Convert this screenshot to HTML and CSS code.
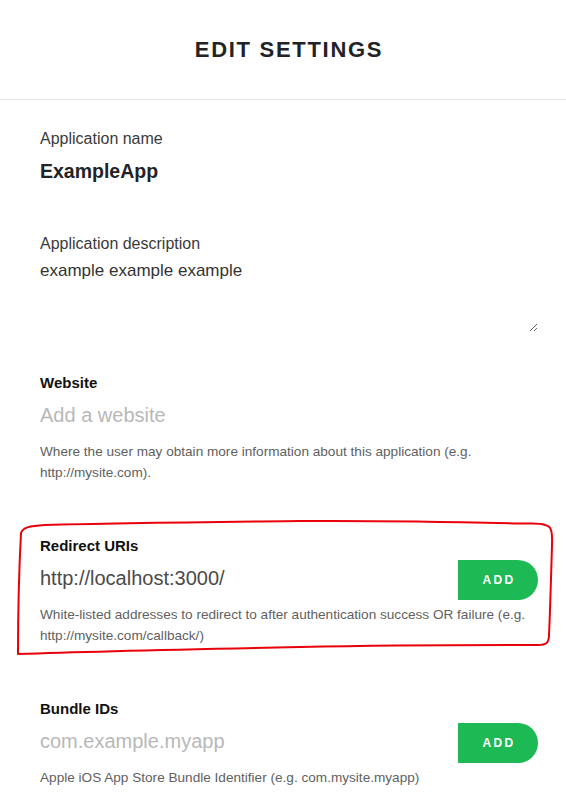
FILE: index.html
```html
<!DOCTYPE html>
<html lang="en">
<head>
<meta charset="utf-8">
<title>Edit settings</title>
<link rel="stylesheet" href="styles.css">
</head>
<body>
<div class="modal">
  <header class="modal-header">
    <h1 class="title">EDIT SETTINGS</h1>
  </header>
  <form class="form">
    <div class="field field-name">
      <label class="label-light">Application name</label>
      <div class="app-name">ExampleApp</div>
    </div>
    <div class="field field-desc">
      <label class="label-light">Application description</label>
      <textarea class="desc">example example example</textarea>
    </div>
    <div class="field field-url">
      <label class="label-bold">Website</label>
      <div class="input-row">
        <input class="text-input" type="text" placeholder="Add a website">
      </div>
      <p class="help">Where the user may obtain more information about this application (e.g. http://mysite.com).</p>
    </div>
    <div class="field field-list">
      <label class="label-bold">Redirect URIs</label>
      <div class="input-row">
        <input class="text-input" type="text" value="http://localhost:3000/">
        <button class="add-btn" type="button">ADD</button>
      </div>
      <p class="help">White-listed addresses to redirect to after authentication success OR failure (e.g. http://mysite.com/callback/)</p>
    </div>
    <div class="field field-list">
      <label class="label-bold">Bundle IDs</label>
      <div class="input-row">
        <input class="text-input" type="text" placeholder="com.example.myapp">
        <button class="add-btn" type="button">ADD</button>
      </div>
      <p class="help">Apple iOS App Store Bundle Identifier (e.g. com.mysite.myapp)</p>
    </div>
  </form>
  <svg class="annotation" width="566" height="801" viewBox="0 0 566 801" aria-hidden="true">
    <path d="M 21 533 C 23 527, 30 526, 45 525 C 120 523, 220 522, 300 521 C 380 520.5, 460 522, 520 523.5 C 532 524, 538 522.5, 545 525 C 551 526, 552.5 530, 552 545 C 551 580, 550 615, 549 635 C 549 643, 546 645, 538 645 C 470 645, 400 645, 300 647 C 200 649, 100 651, 18 654 C 18 620, 19 570, 21 533" fill="none" stroke="#e8000b" stroke-width="2" stroke-linecap="round" stroke-linejoin="round"/>
  </svg>
</div>
</body>
</html>
```

FILE: styles.css
```css
html, body {
  margin: 0;
  padding: 0;
  background: #ffffff;
  overflow: hidden;
}

body {
  font-family: "Liberation Sans", Arial, sans-serif;
  color: #222326;
}

.modal {
  position: relative;
  width: 566px;
  min-height: 801px;
}

.modal-header {
  padding: 35px 28px 34px 40px;
  border-bottom: 1px solid #e6e6e6;
}

.title {
  margin: 0;
  font-size: 22px;
  line-height: 30px;
  font-weight: 700;
  letter-spacing: 1.7px;
  text-align: center;
  color: #222326;
}

.form {
  display: flex;
  flex-direction: column;
  padding: 29px 28px 0 40px;
}

.field {
  display: flex;
  flex-direction: column;
}

.label-light {
  font-size: 16px;
  line-height: 20px;
  color: #3a3a3a;
}

.app-name {
  margin-top: 10px;
  font-size: 19.5px;
  line-height: 24px;
  font-weight: 700;
  color: #222326;
}

.field-desc {
  margin-top: 51px;
}

.desc {
  margin-top: 5px;
  width: 498px;
  height: 73px;
  box-sizing: border-box;
  padding: 0;
  border: none;
  outline: none;
  resize: vertical;
  font-family: "Liberation Sans", Arial, sans-serif;
  font-size: 17px;
  line-height: 24px;
  color: #333333;
  background: transparent;
}

.field-url {
  margin-top: 41px;
}

.field-list {
  margin-top: 53px;
}

.label-bold {
  font-size: 15px;
  line-height: 20px;
  font-weight: 700;
  color: #111111;
}

.input-row {
  display: flex;
  align-items: stretch;
  height: 40px;
  margin-top: 4px;
}

.text-input {
  flex: 1;
  min-width: 0;
  height: 40px;
  box-sizing: border-box;
  margin: 0;
  padding: 0 0 4px 0;
  border: none;
  outline: none;
  background: transparent;
  font-family: "Liberation Sans", Arial, sans-serif;
  font-size: 20px;
  color: #4a4a4a;
}

.text-input::placeholder {
  color: #b8b8b8;
}

.add-btn {
  width: 80px;
  height: 40px;
  margin: 0;
  padding: 0 0 0 2px;
  border: none;
  border-radius: 0 20px 20px 0;
  background: #1db954;
  color: #ffffff;
  font-family: "Liberation Sans", Arial, sans-serif;
  font-size: 12px;
  font-weight: 700;
  letter-spacing: 2.4px;
}

.help {
  margin: 4px 0 0;
  font-size: 13.6px;
  line-height: 21px;
  color: #616161;
}

.annotation {
  position: absolute;
  top: 0;
  left: 0;
  pointer-events: none;
}
```
